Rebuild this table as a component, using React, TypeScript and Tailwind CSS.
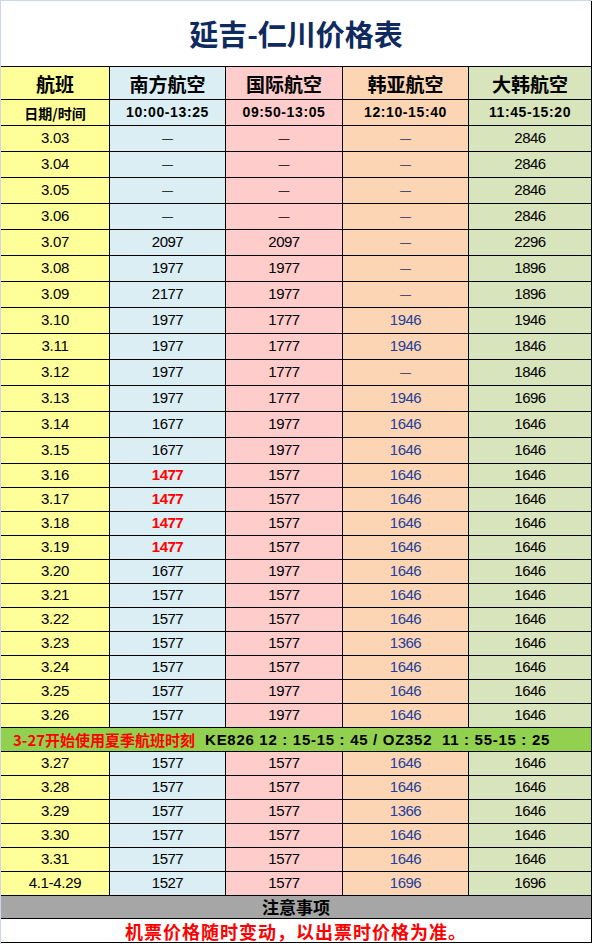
import React from "react";

type Cell = string;
type Row = { d: string; v: [Cell, Cell, Cell, Cell]; red?: boolean };

const top: Row[] = [
  { d: "3.03", v: ["—", "—", "—", "2846"] },
  { d: "3.04", v: ["—", "—", "—", "2846"] },
  { d: "3.05", v: ["—", "—", "—", "2846"] },
  { d: "3.06", v: ["—", "—", "—", "2846"] },
  { d: "3.07", v: ["2097", "2097", "—", "2296"] },
  { d: "3.08", v: ["1977", "1977", "—", "1896"] },
  { d: "3.09", v: ["2177", "1977", "—", "1896"] },
  { d: "3.10", v: ["1977", "1777", "1946", "1946"] },
  { d: "3.11", v: ["1977", "1777", "1946", "1846"] },
  { d: "3.12", v: ["1977", "1777", "—", "1846"] },
  { d: "3.13", v: ["1977", "1777", "1946", "1696"] },
  { d: "3.14", v: ["1677", "1977", "1646", "1646"] },
  { d: "3.15", v: ["1677", "1977", "1646", "1646"] },
];
const mid: Row[] = [
  { d: "3.16", v: ["1477", "1577", "1646", "1646"], red: true },
  { d: "3.17", v: ["1477", "1577", "1646", "1646"], red: true },
  { d: "3.18", v: ["1477", "1577", "1646", "1646"], red: true },
  { d: "3.19", v: ["1477", "1577", "1646", "1646"], red: true },
  { d: "3.20", v: ["1677", "1977", "1646", "1646"] },
  { d: "3.21", v: ["1577", "1577", "1646", "1646"] },
  { d: "3.22", v: ["1577", "1577", "1646", "1646"] },
  { d: "3.23", v: ["1577", "1577", "1366", "1646"] },
  { d: "3.24", v: ["1577", "1577", "1646", "1646"] },
  { d: "3.25", v: ["1577", "1977", "1646", "1646"] },
  { d: "3.26", v: ["1577", "1977", "1646", "1646"] },
];
const bottom: Row[] = [
  { d: "3.27", v: ["1577", "1577", "1646", "1646"] },
  { d: "3.28", v: ["1577", "1577", "1646", "1646"] },
  { d: "3.29", v: ["1577", "1577", "1366", "1646"] },
  { d: "3.30", v: ["1577", "1577", "1646", "1646"] },
  { d: "3.31", v: ["1577", "1577", "1646", "1646"] },
  { d: "4.1-4.29", v: ["1527", "1577", "1696", "1696"] },
];

const cjk = "font-['Noto_Sans_CJK_SC',sans-serif]";
const num = "font-['Liberation_Sans','Noto_Sans_CJK_SC',sans-serif]";
const cell = "flex items-center justify-center border-r border-b border-black";

function Val({ v, blue, red }: { v: string; blue?: boolean; red?: boolean }) {
  if (v === "—") {
    return (
      <span className={`${num} text-[11px] leading-none ${blue ? "text-[#1c2f6b]" : "text-black"}`}>—</span>
    );
  }
  if (red) {
    return <span className={`${num} text-[15px] font-bold tracking-[-0.5px] text-[#ff0000]`}>{v}</span>;
  }
  return (
    <span className={`${num} text-[15px] tracking-[-0.5px] ${blue ? "text-[#24409a]" : "text-black"}`}>{v}</span>
  );
}

function DataRow({ r, h }: { r: Row; h: string }) {
  return (
    <div className={`flex ${h}`}>
      <div className={`${cell} w-[109px] bg-[#ffff99]`}>
        <span className={`${num} text-[15px] tracking-[-0.3px] text-black`}>{r.d}</span>
      </div>
      <div className={`${cell} w-[116px] bg-[#daeef3]`}>
        <Val v={r.v[0]} red={r.red} />
      </div>
      <div className={`${cell} w-[117px] bg-[#ffcccc]`}>
        <Val v={r.v[1]} />
      </div>
      <div className={`${cell} w-[126px] bg-[#fcd5b4]`}>
        <Val v={r.v[2]} blue />
      </div>
      <div className={`${cell} w-[123px] bg-[#d8e4bc]`}>
        <Val v={r.v[3]} />
      </div>
    </div>
  );
}

export default function App() {
  return (
    <div className="w-[592px] h-[944px] bg-white border-t border-l border-[#cdd6e8] overflow-hidden">
      <div className="h-[66px] flex items-center justify-center border-b border-r border-black">
        <span className={`${cjk} text-[29px] font-bold text-[#0f2a5e] leading-none`}>延吉-仁川价格表</span>
      </div>
      <div className="flex h-[33px]">
        {[
          ["航班", "w-[109px] bg-[#ffff99]"],
          ["南方航空", "w-[116px] bg-[#daeef3]"],
          ["国际航空", "w-[117px] bg-[#ffcccc]"],
          ["韩亚航空", "w-[126px] bg-[#fcd5b4]"],
          ["大韩航空", "w-[123px] bg-[#d8e4bc]"],
        ].map(([t, c]) => (
          <div key={t} className={`${cell} ${c}`}>
            <span className={`${cjk} text-[19px] font-bold text-black leading-none`}>{t}</span>
          </div>
        ))}
      </div>
      <div className="flex h-[26px]">
        <div className={`${cell} w-[109px] bg-[#ffff99]`}>
          <span className={`${cjk} text-[14px] font-bold text-black leading-none`}>日期/时间</span>
        </div>
        {[
          ["10:00-13:25", "w-[116px] bg-[#daeef3]"],
          ["09:50-13:05", "w-[117px] bg-[#ffcccc]"],
          ["12:10-15:40", "w-[126px] bg-[#fcd5b4]"],
          ["11:45-15:20", "w-[123px] bg-[#d8e4bc]"],
        ].map(([t, c]) => (
          <div key={t} className={`${cell} ${c}`}>
            <span className={`${num} text-[14px] font-bold tracking-[0.6px] text-black`}>{t}</span>
          </div>
        ))}
      </div>
      {top.map((r) => (
        <DataRow key={r.d} r={r} h="h-[26px]" />
      ))}
      {mid.map((r) => (
        <DataRow key={r.d} r={r} h="h-[24px]" />
      ))}
      <div className="h-[24px] flex items-center bg-[#92d050] border-r border-b border-black pl-[12px]">
        <span className={`${cjk} text-[15px] font-bold text-[#ff0000] leading-none`}>3-27开始使用夏季航班时刻</span>
        <span className={`${num} text-[15px] font-bold tracking-[0.7px] text-black leading-none ml-[10px] whitespace-pre`}>
          {"KE826 12 : 15-15 : 45 / OZ352  11 : 55-15 : 25"}
        </span>
      </div>
      {bottom.map((r) => (
        <DataRow key={r.d} r={r} h="h-[24px]" />
      ))}
      <div className="h-[23px] flex items-center justify-center bg-[#a6a6a6] border-r border-b border-black">
        <span className={`${cjk} text-[17px] font-bold text-black leading-[18px]`}>注意事项</span>
      </div>
      <div className="h-[24px] flex items-center justify-center bg-white border-r border-b border-black">
        <span className={`${cjk} text-[18px] font-bold tracking-[1px] text-[#ff0000] leading-[20px]`}>机票价格随时变动，以出票时价格为准。</span>
      </div>
    </div>
  );
}
